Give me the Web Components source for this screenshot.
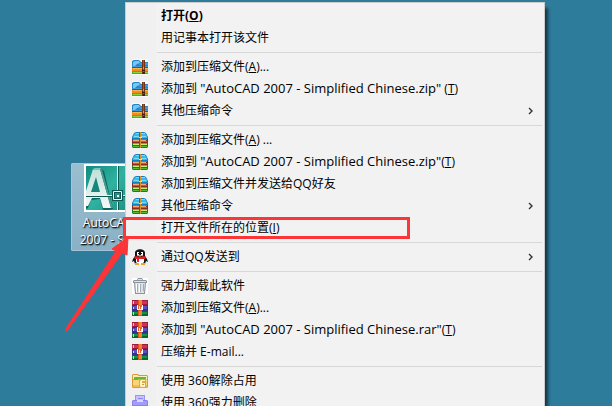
<!DOCTYPE html>
<html lang="zh-CN">
<head>
  <meta charset="UTF-8">
  <meta name="viewport" content="width=device-width, initial-scale=1.0">
  <title>Desktop</title>
  <style>
    html, body {
      height: 100%;
      margin: 0;
      overflow: hidden;
    }
    body {
      font: 12px/22px "Open Sans", "Noto Sans CJK SC", sans-serif;
    }
    .file {
      font-size: 13px;
      line-height: 1;
    }
  </style>
</head>
<body>
  <template id="desk-top">
    <style>
      :host {
        background: #2d7c9b;
        display: block;
        height: 100%;
        overflow: hidden;
        position: relative;
      }
    </style>
    <slot></slot>
  </template>

  <template id="desktop-shortcut">
    <style>
      :host {
        background: linear-gradient(#9bbed0, #8ab1c6);
        border: 1px solid #a3c5d6;
        border-radius: 1px;
        box-sizing: border-box;
        left: 71px;
        position: absolute;
        top: 163px;
        width: 74px;
      }
      a {
        align-items: center;
        color: #fff;
        display: flex;
        flex-direction: column;
        gap: 2px;
        line-height: 17px;
        padding-bottom: 2px;
        text-align: center;
        text-decoration: none;
        text-shadow: 1px 1px 2px #000, 1px 1px 1px #10222c;
      }
      svg {
        display: block;
        height: 48px;
        width: 48px;
      }
    </style>
    <a href="#">
      <svg viewBox="0 0 48 48" aria-hidden="true">
        <defs>
          <linearGradient id="bg" x1="0" y1="0" x2="1" y2="1">
            <stop offset="0" stop-color="#118a80"/>
            <stop offset=".5" stop-color="#2fb3a1"/>
            <stop offset="1" stop-color="#1c9184"/>
          </linearGradient>
          <linearGradient id="face" x1="0" y1="0" x2="0" y2="1">
            <stop offset="0" stop-color="#bfe0da"/>
            <stop offset="1" stop-color="#f3f9f7"/>
          </linearGradient>
        </defs>
        <path fill="#fff" d="M0 0h48v48H0z"/>
        <path fill="url(#bg)" d="M2 2h44v44H2z"/>
        <path fill="#0d655e" d="M10 5l5-1 5 3 9 38-4 1h-6l-3-11-9 1-3 8-2 1V28z"/>
        <path fill="url(#face)" d="M9 5h7l11 39h-8l-3-10H8L4 42H2V27z"/>
        <path fill="#17877c" d="M12 13l4 15H7z"/>
        <path fill="#7fc4ba" d="M9 5l2-1h6l-1 2H9z"/>
        <path fill="#4a9d94" d="M16 5l2 1 11 38h-2z"/>
        <path stroke="#0f5751" d="M2 32.500h26M39 32.500h7M34.500 2v25M34.500 38v8"/>
        <path stroke="#e0f7f2" d="M2 31.500h26M39 31.500h7M33.500 2v25M33.500 38v8"/>
        <path fill="#278f85" stroke="#0f5751" stroke-width="3" d="M29.500 27.500h8v8h-8z"/>
        <path fill="none" stroke="#e9fffb" d="M29.500 27.500h8v8h-8z"/>
        <path fill="#e9fffb" d="M33 31h2v2h-2z"/>
      </svg>
      <slot></slot>
    </a>
  </template>

  <template id="context-menu">
    <style>
      :host {
        background: linear-gradient(90deg, #f0f0f0 30px, #f2f2f2 30px);
        border: 1px solid #ccc;
        box-shadow: 4px 5px 3px -1px rgba(0, 0, 0, .55);
        display: flex;
        flex-direction: column;
        left: 125px;
        padding: 2px;
        position: absolute;
        right: 67px;
        top: 2px;
      }
    </style>
    <slot></slot>
  </template>

  <template id="menu-item">
    <style>
      :host {
        display: block;
      }
      button {
        align-items: center;
        background: none;
        border: 0;
        color: #000;
        display: flex;
        font: inherit;
        gap: 13px;
        height: 22px;
        padding: 0 8px 0 4px;
        text-align: left;
        white-space: nowrap;
        width: 100%;
      }
      button:hover {
        background: #fff;
      }
      .icon, .icon svg {
        display: block;
        height: 16px;
        width: 16px;
      }
      .label {
        flex: 1;
      }
      .more {
        display: none;
        height: 8px;
        width: 6px;
      }
      :host([submenu]) .more {
        display: block;
      }
      :host([default]) .label {
        font-weight: 700;
      }
    </style>
    <button type="button" role="menuitem">
      <span class="icon"></span>
      <span class="label"><slot></slot></span>
      <svg class="more" viewBox="0 0 6 8" aria-hidden="true">
        <path d="M1 1l3 3-3 3" fill="none" stroke="#333" stroke-width="1.400"/>
      </svg>
    </button>
  </template>

  <template id="menu-separator">
    <style>
      :host {
        display: block;
        padding: 3px 0 3px 29px;
      }
      hr {
        background: #d7d7d7;
        border: 0;
        height: 1px;
        margin: 0;
      }
    </style>
    <hr>
  </template>

  <template id="callout-mark">
    <style>
      :host {
        left: 0;
        pointer-events: none;
        position: absolute;
        top: 0;
      }
      svg {
        display: block;
      }
    </style>
    <svg width="420" height="340" aria-hidden="true">
      <path d="M124.500 218.500h284v19h-284z" fill="none" stroke="#fb3538" stroke-width="3"/>
      <path d="M65 330L116 251l-4-2 16-12-1 18-5-2L67 331z" fill="#fb3538" stroke="#fb3538"/>
    </svg>
  </template>

  <script>
    // 16x16 artwork, keyed by the icon attribute of <menu-item>
    const ICONS = {
      zip: `
        <path fill="#fafafa" d="M0 0h16v16H0z"/>
        <path fill="#2386ca" d="M0 2l2-1h5l2 2h7v6H0z"/>
        <path fill="#7ac6f0" d="M1 3l2-1h4l1 2-3 1-2 2H1z"/>
        <path fill="#3f9ade" d="M8 4h8v2H7zM0 7h16v1H0z"/>
        <path fill="#17609e" d="M0 8h16v1H0z"/>
        <path fill="#f58b20" d="M0 9h16v3H0z"/>
        <path fill="#ffb648" d="M1 9h15v1H1z"/>
        <path fill="#4fb022" d="M0 12h16v3H0z"/>
        <path fill="#87d43e" d="M1 13h15v1H1z"/>
        <path fill="#743315" d="M10 1h3v14h-3z"/>
        <path fill="#a85424" d="M11 1h1v14h-1z"/>
        <path fill="#d99a55" d="M11 8h1v2h-1z"/>
        <path fill="#451c10" d="M10 11h3v1h-3zM11 13h2v2h-2z"/>`,
      stack: `
        <path fill="#167fc2" d="M2 1l2-1h8l2 1 2 4v2H0V5z"/>
        <path fill="#36bbe8" d="M3 1h10l2 3v2H1V4z"/>
        <path fill="#79dcf6" d="M4 1h9v1H4zM2 4h12v1H2z"/>
        <path fill="#892c22" d="M0 7h16v4H0z"/>
        <path fill="#d9563a" d="M1 7h14v1H1zM1 9h14v1H1z"/>
        <path fill="#f4aa75" d="M1 8h13v1H1z"/>
        <path fill="#22782c" d="M0 11h16v4l-1 1H1l-1-1z"/>
        <path fill="#57bb36" d="M1 11h14v1H1zM1 14h14v1H1z"/>
        <path fill="#c8ed73" d="M1 12h14v1H1z"/>
        <path fill="#8a4f19" d="M7 1h2v15H7z"/>
        <path fill="#d7922c" d="M8 0h1v16H8z"/>
        <path fill="#ffe15a" d="M7 5h3v1H7z"/>`,
      rar: `
        <path fill="#9c1b3c" d="M0 0h16v5H0z"/>
        <path fill="#d52e59" d="M0 1h15v3H0z"/>
        <path fill="#343188" d="M0 5h16v6H0z"/>
        <path fill="#5851bd" d="M1 6h14v3H1z"/>
        <path fill="#08692b" d="M0 11h16v5H0z"/>
        <path fill="#159344" d="M0 12h15v2H0z"/>
        <path fill="#f8d457" d="M1 1h1v3H1zM1 7h1v2H1zM1 12h1v3H1z"/>
        <path fill="#d75819" d="M6 0h4v16H6z"/>
        <path fill="#f58132" d="M7 0h3v5H7zM7 11h3v4H7z"/>
        <path fill="#fff" d="M5 5h1v5H5zM10 5h1v5h-1zM6 9h4v1H6z"/>
        <path fill="#e8582f" d="M6 5h4v4H6z"/>
        <path fill="#ffe3d2" d="M7 6h1v3H7zM9 7h1v2H9z"/>`,
      qq: `
        <path fill="#141414" d="M3 4c0-5 10-5 10 0v3l2 3 1 3-2-1-1 3H3l-1-3-2 1 1-3 2-3z"/>
        <path fill="#fff" d="M4 9h8v4l-2 2H6l-2-2zM5 3h2v3H5zM9 3h2v3H9z"/>
        <path fill="#111" d="M6 4h1v1H6zM9 4h1v1H9z"/>
        <path fill="#f6a326" d="M5 6h6v1H9L8 8 7 7H5zM3 14h4v2H3zM9 14h4v2H9z"/>
        <path fill="#e51b23" d="M2 8l2-1 4 1 4-1 2 1-1 2H7v3H5v-3H3z"/>`,
      trash: `
        <path fill="#fff" d="M0 0h16v16H0z"/>
        <path fill="#8c949d" d="M1 3l1-1h3l1-2h4l1 2h3l1 1v2h-1l-1 11H3L2 5H1z"/>
        <path fill="#dce2e8" d="M2 3h12v1H2zM6 1h4v1H6zM3 5h10l-1 10H4z"/>
        <path fill="#a3abb5" d="M5 6h1v8H5zM8 6h1v8H8zM11 6h1v7h-1z"/>
        <path fill="#fff" d="M4 6h1v8H4zM7 6h1v8H7z"/>`,
      folder: `
        <path fill="#d79a36" d="M0 2l1-1h5l1 1h8l1 1v11l-1 1H1l-1-1z"/>
        <path fill="#fff0b4" d="M1 2h5v1h9v3H1z"/>
        <path fill="#65b834" d="M2 4h12v3H2z"/>
        <path fill="#f9d67a" d="M1 7h5l1-1h8v8H1z"/>
        <path fill="#f0bd58" d="M1 12h14v2H1z"/>
        <path fill="#e6a63e" d="M7 6h7v9H7z"/>
        <path fill="#fff4c7" d="M9 7h4v1h-3v2h3v4H9l-1-1V8z"/>
        <path fill="#df972b" d="M10 11h2v1h-2z"/>`,
      shredder: `
        <path fill="#9b94f3" d="M3 0h10v7H3z"/>
        <path fill="#c4c1ff" d="M4 1h8v5H4z"/>
        <path fill="#8f88f3" d="M6 3h5v1H6z"/>
        <path fill="#8a80ee" d="M1 5h14l1 1v9H0V6z"/>
        <path fill="#a39aff" d="M1 6h14v4H1z"/>
        <path fill="#dcd9ff" d="M5 5h6v2H5z"/>
        <path fill="#7c71e4" d="M2 11h12v4H2z"/>`
    };

    class TemplateElement extends HTMLElement {
      constructor() {
        super();

        const template = document.getElementById(this.localName);

        this.attachShadow({ mode: 'open' });
        this.shadowRoot.appendChild(template.content.cloneNode(true));
      }
    }

    class DeskTop extends TemplateElement {}

    class DesktopShortcut extends TemplateElement {}

    class ContextMenu extends TemplateElement {
      connectedCallback() {
        this.setAttribute('role', 'menu');
      }
    }

    class MenuItem extends TemplateElement {
      connectedCallback() {
        const art = ICONS[this.getAttribute('icon')];

        if (art) {
          this.shadowRoot.querySelector('.icon').innerHTML =
            `<svg viewBox="0 0 16 16" aria-hidden="true">${art}</svg>`;
        }
        if (this.hasAttribute('submenu')) {
          this.shadowRoot.querySelector('button').setAttribute('aria-haspopup', 'menu');
        }
      }
    }

    class MenuSeparator extends TemplateElement {}

    class CalloutMark extends TemplateElement {}

    customElements.define('desk-top', DeskTop);
    customElements.define('desktop-shortcut', DesktopShortcut);
    customElements.define('context-menu', ContextMenu);
    customElements.define('menu-item', MenuItem);
    customElements.define('menu-separator', MenuSeparator);
    customElements.define('callout-mark', CalloutMark);
  </script>

  <desk-top>
    <desktop-shortcut>AutoCAD<br>2007 - Si...</desktop-shortcut>
    <context-menu>
      <menu-item default>打开(<u>O</u>)</menu-item>
      <menu-item>用记事本打开该文件</menu-item>
      <menu-separator></menu-separator>
      <menu-item icon="zip">添加到压缩文件(<u>A</u>)...</menu-item>
      <menu-item icon="zip">添加到 <span class="file">"AutoCAD 2007 - Simplified Chinese.zip"</span> (<u>T</u>)</menu-item>
      <menu-item icon="zip" submenu>其他压缩命令</menu-item>
      <menu-separator></menu-separator>
      <menu-item icon="stack">添加到压缩文件(<u>A</u>) ...</menu-item>
      <menu-item icon="stack">添加到 <span class="file">"AutoCAD 2007 - Simplified Chinese.zip"</span>(<u>T</u>)</menu-item>
      <menu-item icon="stack">添加到压缩文件并发送给QQ好友</menu-item>
      <menu-item icon="stack" submenu>其他压缩命令</menu-item>
      <menu-item>打开文件所在的位置(<u>I</u>)</menu-item>
      <menu-separator></menu-separator>
      <menu-item icon="qq" submenu>通过QQ发送到</menu-item>
      <menu-separator></menu-separator>
      <menu-item icon="trash">强力卸载此软件</menu-item>
      <menu-item icon="rar">添加到压缩文件(<u>A</u>)...</menu-item>
      <menu-item icon="rar">添加到 <span class="file">"AutoCAD 2007 - Simplified Chinese.rar"</span>(<u>T</u>)</menu-item>
      <menu-item icon="rar">压缩并 E-mail...</menu-item>
      <menu-separator></menu-separator>
      <menu-item icon="folder">使用 360解除占用</menu-item>
      <menu-item icon="shredder">使用 360强力删除</menu-item>
    </context-menu>
    <callout-mark></callout-mark>
  </desk-top>
</body>
</html>
